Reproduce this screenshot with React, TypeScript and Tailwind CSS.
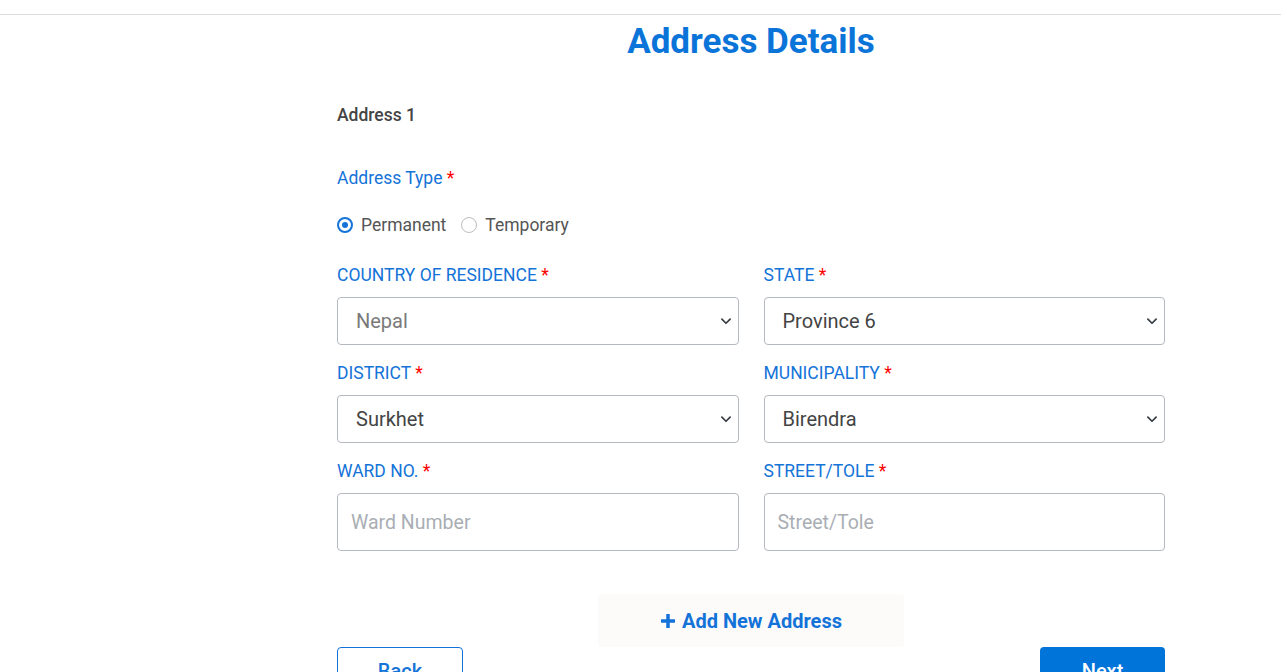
import { ChangeEvent, useState } from "react";

const Label = ({ text }: { text: string }) => (
  <label className="block text-[17.5px] leading-[22px] text-[#1473d8] uppercase">
    {text} <span className="text-[#f00]">*</span>
  </label>
);

const Chevron = () => (
  <svg
    className="pointer-events-none absolute right-[7px] top-1/2 -translate-y-1/2"
    width="12"
    height="12"
    viewBox="0 0 16 16"
    fill="none"
  >
    <path d="M2.5 5.5l5.5 5.5 5.5-5.5" stroke="#343a40" strokeWidth="2.2" strokeLinecap="round" strokeLinejoin="round" />
  </svg>
);

const SelectField = ({
  label,
  value,
  options,
  disabled,
}: {
  label: string;
  value: string;
  options: string[];
  disabled?: boolean;
}) => {
  const [val, setVal] = useState(value);
  return (
    <div className="flex flex-col gap-[11px]">
      <Label text={label} />
      <div className="relative">
        <select
          value={val}
          disabled={disabled}
          onChange={(e: ChangeEvent<HTMLSelectElement>) => setVal(e.target.value)}
          className={`w-full h-[48px] appearance-none rounded-[4px] border border-[#b4b9bf] bg-white pl-[18px] pr-8 text-[20px] outline-none ${
            disabled ? "text-[#7a7a7a]" : "text-[#444]"
          }`}
        >
          {options.map((o) => (
            <option key={o}>{o}</option>
          ))}
        </select>
        <Chevron />
      </div>
    </div>
  );
};

const InputField = ({ label, placeholder }: { label: string; placeholder: string }) => (
  <div className="flex flex-col gap-[11px]">
    <Label text={label} />
    <input
      placeholder={placeholder}
      className="w-full h-[58px] rounded-[4px] border border-[#b4b9bf] bg-white px-[13px] text-[19.5px] text-[#444] placeholder:text-[#a9aeb4] outline-none"
    />
  </div>
);

const Radio = ({ checked, text }: { checked?: boolean; text: string }) => (
  <label className="flex items-center gap-[8px] text-[17.5px] text-[#555]">
    <span
      className={`flex h-[16px] w-[16px] items-center justify-center rounded-full ${
        checked ? "border-2 border-[#1473d8]" : "border-[1.5px] border-[#bdbdbd]"
      }`}
    >
      {checked && <span className="h-[6px] w-[6px] rounded-full bg-[#1473d8]" />}
    </span>
    {text}
  </label>
);

const App = () => {
  return (
    <div className="min-h-screen bg-white font-['Roboto',sans-serif] text-[#444]">
      <div className="h-[15px] border-b border-[#dcdcdc]" />

      <div className="flex">
        <div className="w-[221px] shrink-0" />
        <main className="flex-1">
          <div className="mx-auto w-[828px]">
            <h1 className="mt-[7px] text-center text-[35px] leading-[40px] font-bold text-[#0b74d9]">
              Address Details
            </h1>

            <h2 className="mt-[41px] text-[17.5px] leading-[24px] font-medium text-[#444]">
              Address 1
            </h2>

            <p className="mt-[39px] text-[17.5px] leading-[24px] text-[#1473d8]">
              Address Type <span className="text-[#f00]">*</span>
            </p>

            <div className="mt-[22px] flex items-center gap-[15px]">
              <Radio checked text="Permanent" />
              <Radio text="Temporary" />
            </div>

            <div className="mt-[26px] grid grid-cols-2 gap-x-[25px] gap-y-[17px]">
              <SelectField label="Country of Residence" value="Nepal" options={["Nepal"]} disabled />
              <SelectField label="State" value="Province 6" options={["Province 6"]} />
              <SelectField label="District" value="Surkhet" options={["Surkhet"]} />
              <SelectField label="Municipality" value="Birendra" options={["Birendra"]} />
              <InputField label="Ward No." placeholder="Ward Number" />
              <InputField label="Street/Tole" placeholder="Street/Tole" />
            </div>

            <div className="mt-[43px] flex justify-center">
              <button
                type="button"
                className="flex h-[53px] w-[306px] items-center justify-center gap-[6px] rounded-[4px] bg-[#fcfbfa] text-[20px] font-bold text-[#1473d8]"
              >
                <svg width="16" height="16" viewBox="0 0 16 16">
                  <path d="M8 1v14M1 8h14" stroke="#1473d8" strokeWidth="3.5" />
                </svg>
                Add New Address
              </button>
            </div>

            <div className="flex justify-between">
              <button
                type="button"
                className="h-[48px] w-[126px] rounded-[4px] border border-[#1473d8] bg-white text-[20px] font-medium text-[#1473d8]"
              >
                Back
              </button>
              <button
                type="button"
                className="h-[48px] w-[125px] rounded-[4px] bg-[#0074d9] text-[20px] font-medium text-white"
              >
                Next
              </button>
            </div>
          </div>
        </main>
      </div>
    </div>
  );
};

export default App;
